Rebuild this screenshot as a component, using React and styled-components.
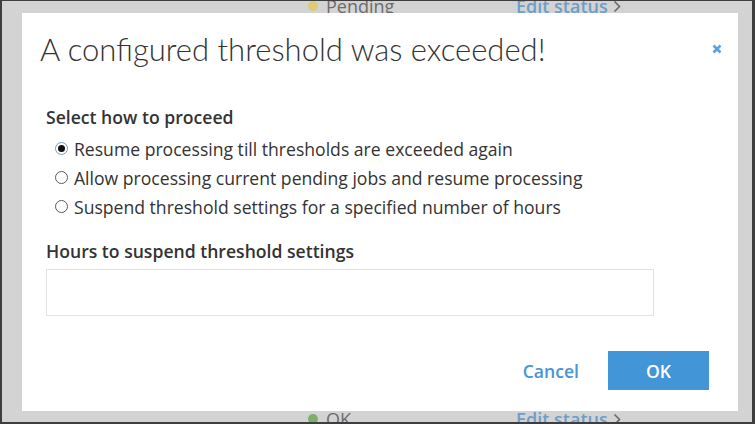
import React from "react";
import styled, { createGlobalStyle } from "styled-components";

const GlobalStyle = createGlobalStyle`
  html, body {
    margin: 0;
    padding: 0;
    background: #d3d3d3;
  }
  * { box-sizing: border-box; }
`;

const Frame = styled.div`
  position: relative;
  width: 755px;
  height: 424px;
  overflow: hidden;
  background: #d3d3d3;
  border-style: solid;
  border-color: #3e3e3e;
  border-width: 1px 3px 2px 2px;
  font-family: "Open Sans", "DejaVu Sans", sans-serif;
`;

const Backdrop = styled.div`
  height: 100%;
  display: flex;
  flex-direction: column;
  justify-content: space-between;
  margin-top: -15px;
`;

const Row = styled.div`
  display: flex;
  align-items: center;
  height: 40px;
  padding-left: 306px;
  margin-bottom: ${(p) => (p.$last ? "-32px" : "0")};
`;

const Dot = styled.span`
  width: 10px;
  height: 10px;
  border-radius: 50%;
  background: ${(p) => p.$color};
  margin-right: 8px;
`;

const StatusText = styled.span`
  width: 190px;
  font-size: 18px;
  color: #6c6c6c;
`;

const EditLink = styled.span`
  display: flex;
  align-items: center;
  gap: 5px;
  font-size: 18px;
  font-weight: 600;
  color: #6c9ecb;
`;

const Modal = styled.div`
  position: absolute;
  left: 20px;
  top: 12px;
  width: 716px;
  height: 398px;
  background: #fff;
  display: flex;
  flex-direction: column;
`;

const Header = styled.div`
  display: flex;
  align-items: center;
  justify-content: space-between;
  padding: 19px 16px 0 18px;
`;

const Title = styled.h2`
  margin: 0;
  font-family: "Lato", "Open Sans", sans-serif;
  font-weight: 300;
  font-size: 31px;
  line-height: 34px;
  color: #333;
`;

const CloseButton = styled.button`
  border: 0;
  background: none;
  padding: 0;
  display: flex;
  cursor: pointer;
`;

const Body = styled.div`
  padding: 39px 24px 0 24px;
  display: flex;
  flex-direction: column;
`;

const Label = styled.div`
  font-size: 17.6px;
  font-weight: 600;
  line-height: 24px;
  color: #333;
  margin-top: ${(p) => p.$mt || 0}px;
`;

const RadioGroup = styled.div`
  margin-top: 5px;
  display: flex;
  flex-direction: column;
`;

const RadioRow = styled.label`
  display: flex;
  align-items: center;
  height: 29px;
  padding-left: 9px;
  font-size: 17.6px;
  color: #333;
`;

const RadioMark = styled.span`
  width: 13px;
  height: 13px;
  border-radius: 50%;
  border: 1px solid ${(p) => (p.$checked ? "#6f9ccc" : "#5a5a5a")};
  margin-right: 6px;
  display: flex;
  align-items: center;
  justify-content: center;
  flex-shrink: 0;

  &::after {
    content: "";
    width: 7px;
    height: 7px;
    border-radius: 50%;
    background: #111;
    display: ${(p) => (p.$checked ? "block" : "none")};
  }
`;

const Input = styled.input`
  margin-top: 6px;
  width: 608px;
  height: 47px;
  border: 1px solid #e2e2e2;
  outline: none;
  font-family: inherit;
  font-size: 16px;
  padding: 0 10px;
`;

const Footer = styled.div`
  margin-top: auto;
  padding: 0 29px 21px 0;
  display: flex;
  justify-content: flex-end;
  align-items: center;
`;

const TextButton = styled.button`
  border: 0;
  background: none;
  font-family: inherit;
  font-size: 17.6px;
  font-weight: 600;
  color: #4a94d6;
  padding: 0 14px;
  margin-right: 15px;
  height: 39px;
`;

const PrimaryButton = styled.button`
  border: 0;
  background: #4295d7;
  color: #fff;
  font-family: inherit;
  font-size: 17.6px;
  font-weight: 600;
  width: 101px;
  height: 39px;
`;

const options = [
  "Resume processing till thresholds are exceeded again",
  "Allow processing current pending jobs and resume processing",
  "Suspend threshold settings for a specified number of hours",
];

const Chevron = () => (
  <svg width="8" height="13" viewBox="0 0 8 13">
    <path d="M1.5 1.5 L6.5 6.5 L1.5 11.5" fill="none" stroke="#6a6a6a" strokeWidth="1.6" />
  </svg>
);

export default function App() {
  return (
    <>
      <GlobalStyle />
      <Frame>
        <Backdrop>
          <Row>
            <Dot $color="#dccd72" />
            <StatusText>Pending</StatusText>
            <EditLink>
              Edit status <Chevron />
            </EditLink>
          </Row>
          <Row $last>
            <Dot $color="#7daf69" />
            <StatusText>OK</StatusText>
            <EditLink>
              Edit status <Chevron />
            </EditLink>
          </Row>
        </Backdrop>
        <Modal>
          <Header>
            <Title>A configured threshold was exceeded!</Title>
            <CloseButton aria-label="Close">
              <svg width="10" height="10" viewBox="0 0 10 10">
                <path d="M1.5 1.5 L8.5 8.5 M8.5 1.5 L1.5 8.5" stroke="#5da0da" strokeWidth="2.6" />
              </svg>
            </CloseButton>
          </Header>
          <Body>
            <Label>Select how to proceed</Label>
            <RadioGroup>
              {options.map((o, i) => (
                <RadioRow key={o}>
                  <RadioMark $checked={i === 0} />
                  {o}
                </RadioRow>
              ))}
            </RadioGroup>
            <Label $mt={18}>Hours to suspend threshold settings</Label>
            <Input />
          </Body>
          <Footer>
            <TextButton>Cancel</TextButton>
            <PrimaryButton>OK</PrimaryButton>
          </Footer>
        </Modal>
      </Frame>
    </>
  );
}
